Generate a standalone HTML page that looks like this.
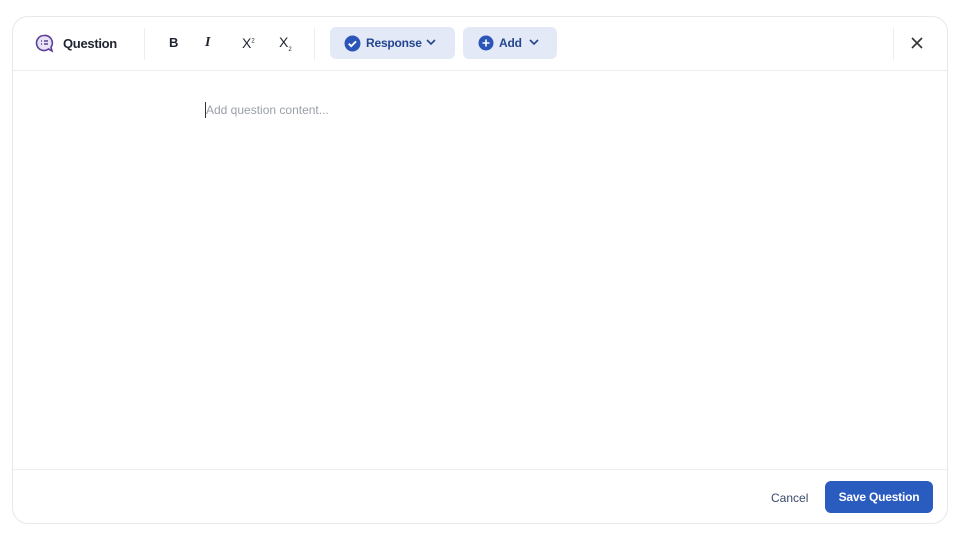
<!DOCTYPE html>
<html><head><meta charset="utf-8"><style>
body{margin:0;width:960px;height:540px;background:#fff;font-family:"Liberation Sans",sans-serif;position:relative;overflow:hidden}
.card{position:absolute;left:12px;top:16px;width:936px;height:508px;border:1px solid #e6e8ec;border-radius:16px;box-sizing:border-box}
.hline{position:absolute;left:13px;width:934px;height:1px;background:#eceef1}
.vline{position:absolute;width:1px;background:#eceef1;top:28px;height:32px}
.t{position:absolute;font-size:14px;color:#1f2430;white-space:nowrap}
.pill{position:absolute;top:27px;height:32px;background:#e3e9f7;border-radius:6px;color:#23468f;font-size:12px;font-weight:bold;letter-spacing:-0.2px}
.pill span{position:absolute;top:9px}
</style></head><body>
<div class="card"></div>
<div class="hline" style="top:70px"></div>
<div class="hline" style="top:469px"></div>
<svg style="position:absolute;left:35px;top:34px" width="20" height="19" viewBox="0 0 20 19"><path d="M9 1.5a7.5 7.5 0 1 0 4.5 13.5l3.5 2-1-3.8A7.5 7.5 0 0 0 9 1.5z" fill="#e9e3f6" stroke="#5b3f9a" stroke-width="1.6"/><path d="M6 7h1M9 7h4M6 10h1M9 10h4" stroke="#5b3f9a" stroke-width="1.5"/></svg>
<div class="t" style="left:63px;top:36px;font-weight:bold;font-size:13px;letter-spacing:-0.3px">Question</div>
<div class="vline" style="left:144px"></div>
<div class="t" style="left:169px;top:35px;font-weight:bold;font-size:13px">B</div>
<div class="t" style="left:205px;top:35px;font-weight:bold;font-style:italic;font-family:'Liberation Serif',serif">I</div>
<div class="t" style="left:242px;top:35px">X<sup style="font-size:6px">2</sup></div>
<div class="t" style="left:279px;top:34px">X<sub style="font-size:6px">2</sub></div>
<div class="vline" style="left:314px"></div>
<div class="pill" style="left:330px;width:125px">
<svg style="position:absolute;left:14px;top:8px" width="17" height="17" viewBox="0 0 16 16"><circle cx="8" cy="8" r="7.5" fill="#2b55b8"/><path d="M4.5 8.2l2.3 2.3 4.5-4.5" stroke="#fff" stroke-width="1.8" fill="none"/></svg>
<span style="left:36px">Response</span>
<svg style="position:absolute;left:96px;top:12px" width="10" height="7"><path d="M1 1l4 4 4-4" stroke="#23468f" stroke-width="1.6" fill="none"/></svg></div>
<div class="pill" style="left:463px;width:94px">
<svg style="position:absolute;left:15px;top:8px" width="16" height="16" viewBox="0 0 16 16"><circle cx="8" cy="8" r="7.5" fill="#2b55b8"/><path d="M8 4.5v7M4.5 8h7" stroke="#fff" stroke-width="1.6"/></svg>
<span style="left:36px">Add</span>
<svg style="position:absolute;left:66px;top:12px" width="10" height="7"><path d="M1 1l4 4 4-4" stroke="#23468f" stroke-width="1.6" fill="none"/></svg></div>
<div class="vline" style="left:893px"></div>
<svg style="position:absolute;left:911px;top:37px" width="12" height="12"><path d="M1 1l10 10M11 1L1 11" stroke="#333" stroke-width="1.6"/></svg>
<div style="position:absolute;left:205px;top:102px;width:1px;height:16px;background:#333"></div>
<div class="t" style="left:206px;top:103px;font-size:12px;color:#9aa0a8">Add question content...</div>
<div class="t" style="left:771px;top:491px;font-size:12px;color:#3a4a6a">Cancel</div>
<div style="position:absolute;left:825px;top:481px;width:108px;height:32px;background:#2a5bbf;border-radius:6px;color:#fff;font-size:12px;font-weight:bold;text-align:center;line-height:32px;letter-spacing:-0.2px">Save Question</div>
</body></html>
